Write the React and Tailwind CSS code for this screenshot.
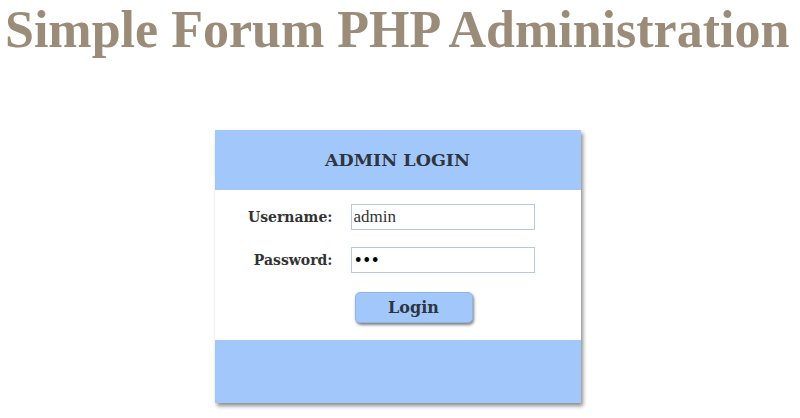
export default function App() {
  return (
    <div className="w-[800px] h-[418px] bg-white overflow-hidden" style={{ fontFamily: '"Liberation Serif", "DejaVu Serif", serif' }}>
      <h1 className="pl-[5px] pt-[2px] text-[52px] leading-[56px] font-bold text-[#9b8c79] whitespace-nowrap">
        Simple Forum PHP Administration
      </h1>
      <div className="flex justify-center pt-[72px] pr-[5px]">
        <div className="w-[366px] bg-white shadow-[2px_3px_4px_rgba(0,0,0,0.45)]" style={{ fontFamily: '"DejaVu Serif", "Liberation Serif", serif' }}>
          <div className="h-[60px] bg-[#a2c8fb] flex items-center justify-center">
            <h2 className="text-[17.5px] font-bold text-[#2f3540]">ADMIN LOGIN</h2>
          </div>
          <div className="h-[150px] pt-[14px] flex flex-col">
            <div className="flex items-center h-[26px]">
              <label className="w-[118px] text-right text-[14px] font-bold text-[#333]">Username:</label>
              <input
                readOnly
                value="admin"
                className="ml-[18px] w-[184px] h-[26px] border border-[#b7c9df] px-[2px] text-[17px] text-[#333] outline-none"
                style={{ fontFamily: '"Liberation Serif", serif' }}
              />
            </div>
            <div className="flex items-center h-[26px] mt-[17px]">
              <label className="w-[118px] text-right text-[14px] font-bold text-[#333]">Password:</label>
              <input
                readOnly
                type="password"
                value="abc"
                className="ml-[18px] w-[184px] h-[26px] border border-[#b7c9df] px-[2px] text-[16px] tracking-[-1px] text-black outline-none"
              />
            </div>
            <div className="pl-[140px] mt-[19px]">
              <button className="w-[118px] h-[31px] rounded-[5px] bg-[#a2c8fb] border border-[#8fb4e6] text-[16px] font-bold text-[#2f3540] shadow-[1px_2px_3px_rgba(0,0,0,0.5)]">
                Login
              </button>
            </div>
          </div>
          <div className="h-[63px] bg-[#a2c8fb]" />
        </div>
      </div>
    </div>
  );
}
